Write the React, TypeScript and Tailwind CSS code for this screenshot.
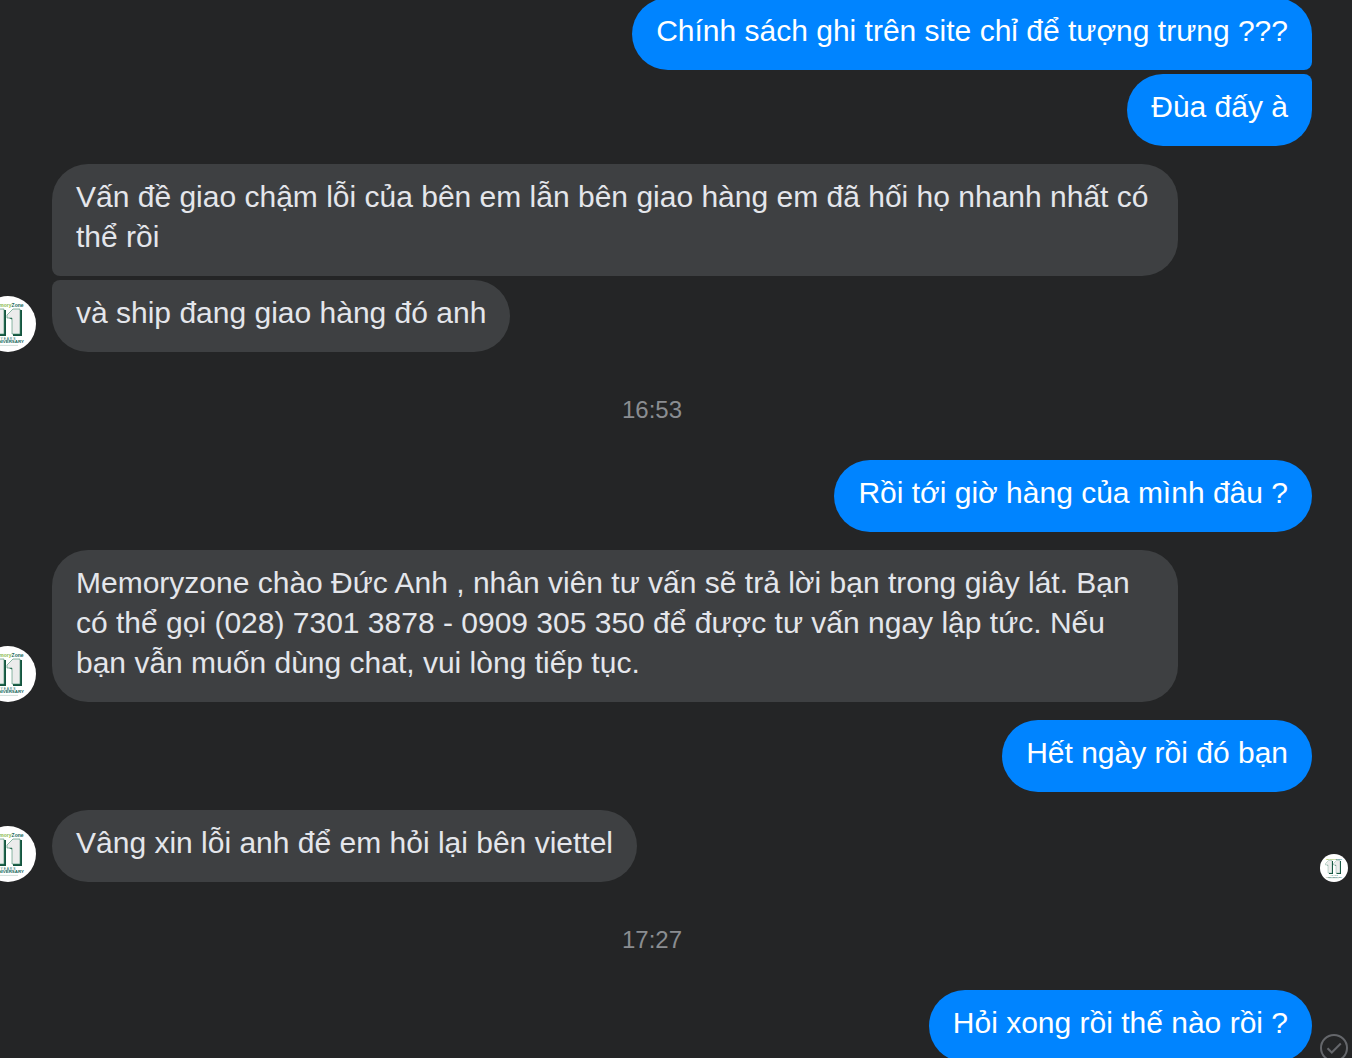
import type { ReactNode } from "react";

const bubble = "w-fit px-6 pt-[13px] pb-[19px] text-[30px] leading-10 break-words";

function Logo({ className }: { className: string }) {
  return (
    <svg viewBox="0 0 56 56" className={className} role="img" aria-label="MemoryZone" fontFamily="Liberation Sans, sans-serif">
      <circle cx="28" cy="28" r="28" fill="#fff" />
      <text x="28" y="11" fontSize="5" fontWeight="bold" textAnchor="middle" fill="#8dbb4a">
        Memory<tspan fill="#17685a">Zone</tspan>
      </text>
      <path d="M18 14h8v26h-8V24l-6-3zM34 14h8v26h-9V24l-6-3z" fill="#14543f" />
      <path d="M17 13h7v25h-8V22h-5v-3zM33 13h7v25h-8V22h-5v-3z" fill="#ececec" stroke="#3f8a6c" strokeWidth="0.6" />
      <text x="28" y="43.6" fontSize="3.4" textAnchor="middle" fill="#17685a">Y E A R S</text>
      <text x="28" y="47.2" fontSize="4.4" fontWeight="bold" textAnchor="middle" fill="#17685a">ANNIVERSARY</text>
      <path d="M17 49.4h21" stroke="#bcd3ca" strokeWidth="0.7" />
    </svg>
  );
}

function Outgoing({ shape = "rounded-[36px]", status, children }: { shape?: string; status?: ReactNode; children: ReactNode }) {
  return (
    <div className="flex items-end gap-2">
      <p className={`${bubble} ${shape} ml-auto bg-[#0084ff] text-white`}>{children}</p>
      <div className="w-7 shrink-0">{status}</div>
    </div>
  );
}

function Incoming({ status, children }: { status?: ReactNode; children: ReactNode }) {
  return (
    <div className="flex items-end gap-2">
      <div className="flex min-w-0 flex-1 items-end gap-4 pr-[134px]">
        <Logo className="-ml-5 size-14 shrink-0" />
        <div className="flex min-w-0 flex-col gap-1">{children}</div>
      </div>
      <div className="w-7 shrink-0">{status}</div>
    </div>
  );
}

function IncomingBubble({ shape = "rounded-[36px]", children }: { shape?: string; children: ReactNode }) {
  return <p className={`${bubble} ${shape} bg-[#3e4042] text-[#e4e6eb]`}>{children}</p>;
}

function Time({ children }: { children: string }) {
  return <time className="block pt-10 pr-11 pb-8 text-center text-2xl leading-9 text-[#8a8d91]">{children}</time>;
}

function SentIcon() {
  return (
    <svg viewBox="0 0 28 28" className="size-7" role="img" aria-label="Đã gửi" fill="none" stroke="#65676b" strokeWidth="2">
      <circle cx="14" cy="14" r="13" />
      <path d="M7.5 14.2l4.300 4.300 9-9" />
    </svg>
  );
}

export default function App() {
  return (
    <main className="h-screen overflow-hidden bg-[#242526] font-['Liberation_Sans',sans-serif]">
      <div className="-mt-0.5 pr-1">
        <div className="flex flex-col gap-[18px]">
          <div className="flex flex-col gap-1">
            <Outgoing shape="rounded-[36px] rounded-br-lg">Chính sách ghi trên site chỉ để tượng trưng ???</Outgoing>
            <Outgoing shape="rounded-[36px] rounded-tr-lg">Đùa đấy à</Outgoing>
          </div>
          <Incoming>
            <IncomingBubble shape="rounded-[36px] rounded-bl-lg">Vấn đề giao chậm lỗi của bên em lẫn bên giao hàng em đã hối họ nhanh nhất có thể rồi</IncomingBubble>
            <IncomingBubble shape="rounded-[36px] rounded-tl-lg">và ship đang giao hàng đó anh</IncomingBubble>
          </Incoming>
        </div>
        <Time>16:53</Time>
        <div className="flex flex-col gap-[18px]">
          <Outgoing>Rồi tới giờ hàng của mình đâu ?</Outgoing>
          <Incoming>
            <IncomingBubble>Memoryzone chào Đức Anh , nhân viên tư vấn sẽ trả lời bạn trong giây lát. Bạn có thể gọi (028) 7301 3878 - 0909 305 350 để được tư vấn ngay lập tức. Nếu bạn vẫn muốn dùng chat, vui lòng tiếp tục.</IncomingBubble>
          </Incoming>
          <Outgoing>Hết ngày rồi đó bạn</Outgoing>
          <Incoming status={<Logo className="size-7" />}>
            <IncomingBubble>Vâng xin lỗi anh để em hỏi lại bên viettel</IncomingBubble>
          </Incoming>
        </div>
        <Time>17:27</Time>
        <Outgoing status={<SentIcon />}>Hỏi xong rồi thế nào rồi ?</Outgoing>
      </div>
    </main>
  );
}
